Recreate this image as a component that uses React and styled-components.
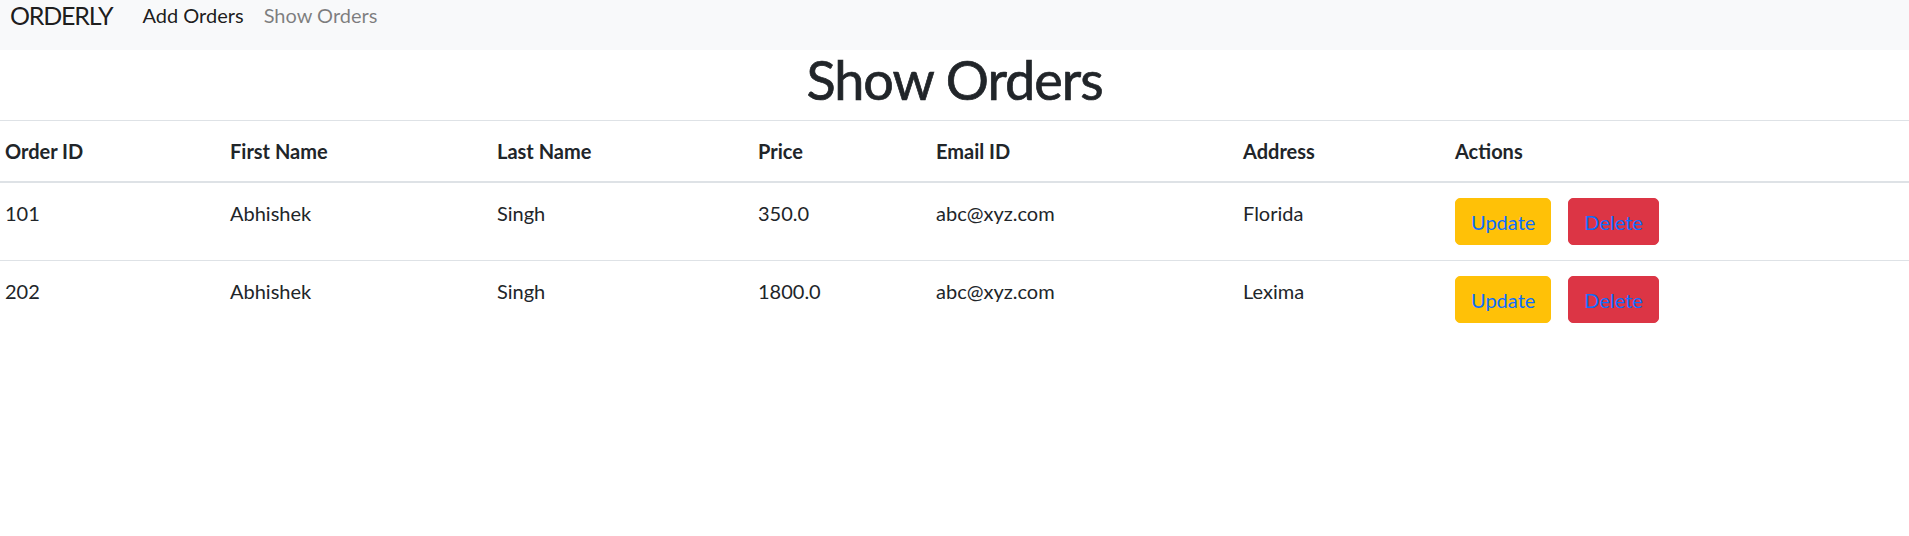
import styled, { createGlobalStyle } from 'styled-components';

const orders = [
  { id: 101, first: 'Abhishek', last: 'Singh', price: '350.0', email: 'abc@xyz.com', address: 'Florida' },
  { id: 202, first: 'Abhishek', last: 'Singh', price: '1800.0', email: 'abc@xyz.com', address: 'Lexima' },
];

const columns = ['Order ID', 'First Name', 'Last Name', 'Price', 'Email ID', 'Address', 'Actions'];
const widths = [225, 267, 261, 178, 307, 212, 459];

const GlobalStyle = createGlobalStyle`
  body {
    margin: 0;
    font-family: Lato, "Open Sans", sans-serif;
    font-size: 20px;
    line-height: 1.5;
    color: #212529;
    background: #fff;
  }
`;

export default function App() {
  return (
    <>
      <GlobalStyle />
      <Navbar>
        <Brand href="/">ORDERLY</Brand>
        <NavLinks>
          <NavItem href="/add">Add Orders</NavItem>
          <NavItem href="/show" $muted>
            Show Orders
          </NavItem>
        </NavLinks>
      </Navbar>
      <Title>Show Orders</Title>
      <Table>
        <colgroup>
          {widths.map((w, i) => (
            <col key={i} width={w} />
          ))}
        </colgroup>
        <thead>
          <tr>
            {columns.map((c) => (
              <Th key={c}>{c}</Th>
            ))}
          </tr>
        </thead>
        <tbody>
          {orders.map((o, i) => (
            <Row key={o.id} $last={i === orders.length - 1}>
              <Td>{o.id}</Td>
              <Td>{o.first}</Td>
              <Td>{o.last}</Td>
              <Td>{o.price}</Td>
              <Td>{o.email}</Td>
              <Td>{o.address}</Td>
              <Td>
                <Actions>
                  <Button $bg="#ffc107">Update</Button>
                  <Button $bg="#dc3545">Delete</Button>
                </Actions>
              </Td>
            </Row>
          ))}
        </tbody>
      </Table>
    </>
  );
}

const Navbar = styled.nav`
  display: flex;
  align-items: flex-start;
  height: 50px;
  padding: 0 10px;
  background: #f8f9fa;
`;

const Brand = styled.a`
  font-size: 25px;
  line-height: 30px;
  letter-spacing: -1.2px;
  color: rgba(0, 0, 0, 0.9);
  text-decoration: none;
  margin-right: 20px;
`;

const NavLinks = styled.div`
  display: flex;
`;

const NavItem = styled.a`
  font-size: 20px;
  line-height: 24px;
  padding: 3px 10px 0;
  text-decoration: none;
  color: ${(p) => (p.$muted ? 'rgba(0, 0, 0, 0.5)' : 'rgba(0, 0, 0, 0.9)')};
`;

const Title = styled.h1`
  margin: 0 0 10px;
  text-align: center;
  font-size: 54px;
  line-height: 60px;
  font-weight: 400;
  letter-spacing: -1px;
  -webkit-text-stroke: 0.7px #212529;
`;

const Table = styled.table`
  width: 100%;
  border-collapse: collapse;
  table-layout: fixed;
  border-top: 1px solid #dee2e6;
`;

const Th = styled.th`
  text-align: left;
  font-weight: 700;
  padding: 15px 5px;
  line-height: 30px;
  border-bottom: 2px solid #dee2e6;
`;

const Row = styled.tr`
  border-bottom: ${(p) => (p.$last ? 'none' : '1px solid #dee2e6')};
`;

const Td = styled.td`
  padding: 15px 5px;
  line-height: 30px;
  vertical-align: top;
`;

const Actions = styled.div`
  display: flex;
  gap: 17px;
`;

const Button = styled.button`
  font-family: inherit;
  font-size: 20px;
  line-height: 30px;
  padding: 7.5px 15px;
  border: 1px solid ${(p) => p.$bg};
  border-radius: 5px;
  background: ${(p) => p.$bg};
  color: #0d6efd;
  cursor: pointer;
`;
